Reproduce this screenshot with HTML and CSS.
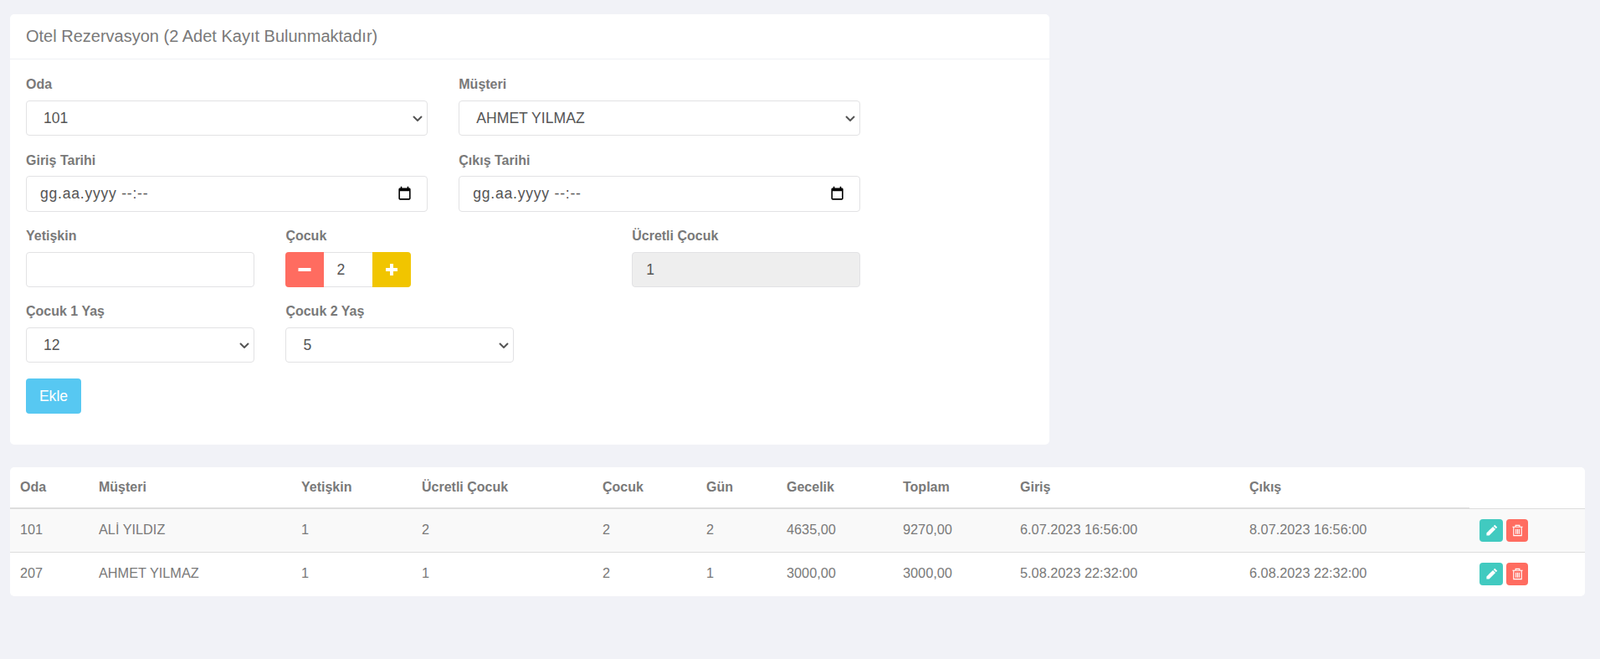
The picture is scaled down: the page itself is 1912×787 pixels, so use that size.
FILE: index.html
```html
<!DOCTYPE html>
<html lang="tr">
<head>
    <meta charset="UTF-8">
    <title>Otel Rezervasyon</title>
    <link rel="stylesheet" href="styles.css">
</head>
<body>

<div class="main">
    <section class="card form-card">
        <header class="card-head">Otel Rezervasyon (2 Adet Kayıt Bulunmaktadır)</header>
        <form class="form-grid">
            <div class="field span-5">
                <label>Oda</label>
                <select class="control"><option>101</option></select>
            </div>
            <div class="field span-5">
                <label>Müşteri</label>
                <select class="control"><option>AHMET YILMAZ</option></select>
            </div>

            <div class="field date-field span-5">
                <label>Giriş Tarihi</label>
                <div class="control date-control">
                    <input class="date-text" type="text" value="gg.aa.yyyy --:--">
                    <svg class="cal-icon" viewBox="0 0 24 24"><path d="M19 3h-1V1h-2v2H8V1H6v2H5c-1.11 0-1.99.9-1.99 2L3 19c0 1.1.89 2 2 2h14c1.1 0 2-.9 2-2V5c0-1.1-.9-2-2-2zm0 16H5V8h14v11z"/></svg>
                </div>
            </div>
            <div class="field date-field span-5">
                <label>Çıkış Tarihi</label>
                <div class="control date-control">
                    <input class="date-text" type="text" value="gg.aa.yyyy --:--">
                    <svg class="cal-icon" viewBox="0 0 24 24"><path d="M19 3h-1V1h-2v2H8V1H6v2H5c-1.11 0-1.99.9-1.99 2L3 19c0 1.1.89 2 2 2h14c1.1 0 2-.9 2-2V5c0-1.1-.9-2-2-2zm0 16H5V8h14v11z"/></svg>
                </div>
            </div>

            <div class="field span-3">
                <label>Yetişkin</label>
                <input class="control" type="text">
            </div>
            <div class="field span-3">
                <label>Çocuk</label>
                <div class="stepper">
                    <button type="button" class="step-btn step-minus">
                        <svg viewBox="0 0 16 16"><rect x="0.5" y="6" width="15" height="4"/></svg>
                    </button>
                    <input class="step-value" type="text" value="2">
                    <button type="button" class="step-btn step-plus">
                        <svg viewBox="0 0 16 16"><path d="M6 1h4v5h5v4h-5v5H6v-5H1V6h5z"/></svg>
                    </button>
                </div>
            </div>
            <div class="field paid-field">
                <label>Ücretli Çocuk</label>
                <input class="control" type="text" value="1" disabled>
            </div>

            <div class="field span-3">
                <label>Çocuk 1 Yaş</label>
                <select class="control"><option>12</option></select>
            </div>
            <div class="field span-3">
                <label>Çocuk 2 Yaş</label>
                <select class="control"><option>5</option></select>
            </div>

            <div class="span-12">
                <button type="button" class="btn-add">Ekle</button>
            </div>
        </form>
    </section>

    <section class="card table-card">
        <table class="res-table">
            <colgroup>
                <col class="c-oda"><col class="c-musteri"><col class="c-yetiskin"><col class="c-ucretli">
                <col class="c-cocuk"><col class="c-gun"><col class="c-gecelik"><col class="c-toplam">
                <col class="c-giris"><col class="c-cikis"><col class="c-actions">
            </colgroup>
            <thead>
                <tr>
                    <th>Oda</th><th>Müşteri</th><th>Yetişkin</th><th>Ücretli Çocuk</th><th>Çocuk</th>
                    <th>Gün</th><th>Gecelik</th><th>Toplam</th><th>Giriş</th><th>Çıkış</th><th></th>
                </tr>
            </thead>
            <tbody>
                <tr class="striped">
                    <td>101</td><td>ALİ YILDIZ</td><td>1</td><td>2</td><td>2</td><td>2</td>
                    <td>4635,00</td><td>9270,00</td><td>6.07.2023 16:56:00</td><td>8.07.2023 16:56:00</td>
                    <td class="actions">
                        <button type="button" class="act-btn act-edit">
                            <svg viewBox="0 0 16 16"><path d="M12 .8l3.2 3.2-1.6 1.6-3.2-3.2zM9.7 3.1l3.2 3.2-8 8H1.5v-3.2z"/></svg>
                        </button>
                        <button type="button" class="act-btn act-del">
                            <svg viewBox="0 0 16 16"><path class="trash" d="M1.5 3.5h13M5.5 3.5V1.5h5v2M3 3.5v11h10v-11M6 6v6.5M8 6v6.5M10 6v6.5"/></svg>
                        </button>
                    </td>
                </tr>
                <tr>
                    <td>207</td><td>AHMET YILMAZ</td><td>1</td><td>1</td><td>2</td><td>1</td>
                    <td>3000,00</td><td>3000,00</td><td>5.08.2023 22:32:00</td><td>6.08.2023 22:32:00</td>
                    <td class="actions">
                        <button type="button" class="act-btn act-edit">
                            <svg viewBox="0 0 16 16"><path d="M12 .8l3.2 3.2-1.6 1.6-3.2-3.2zM9.7 3.1l3.2 3.2-8 8H1.5v-3.2z"/></svg>
                        </button>
                        <button type="button" class="act-btn act-del">
                            <svg viewBox="0 0 16 16"><path class="trash" d="M1.5 3.5h13M5.5 3.5V1.5h5v2M3 3.5v11h10v-11M6 6v6.5M8 6v6.5M10 6v6.5"/></svg>
                        </button>
                    </td>
                </tr>
            </tbody>
        </table>
    </section>
</div>

</body>
</html>
```
FILE: styles.css
```css
* {
    box-sizing: border-box;
}
body {
    margin: 0;
    background-color: #f1f2f7;
    font-family: "Liberation Sans", Arial, sans-serif;
    font-size: 16px;
    color: #797979;
}
.main {
    padding: 17px 18px 40px 12px;
}
.card {
    background-color: #fff;
    border-radius: 5px;
}
.form-card {
    width: 1242px;
    margin-bottom: 27px;
}
.card-head {
    height: 54px;
    padding: 0 19px;
    line-height: 52px;
    font-size: 20px;
    border-bottom: 1px solid #eff0f4;
}
.form-grid {
    display: grid;
    grid-template-columns: repeat(12, 1fr);
    column-gap: 37.5px;
    row-gap: 19px;
    padding: 20px 19px 37px;
}
.span-3 {
    grid-column: span 3;
}
.span-5 {
    grid-column: span 5;
}
.span-12 {
    grid-column: span 12;
}
.paid-field {
    grid-column: 8 / span 3;
}
.field label {
    display: block;
    height: 19px;
    line-height: 19px;
    margin-bottom: 10px;
    font-weight: bold;
}
.date-field label {
    margin-top: 1px;
    margin-bottom: 9px;
}
.control {
    display: block;
    width: 100%;
    height: 42px;
    padding: 0 16px;
    border: 1px solid #e2e2e4;
    border-radius: 4px;
    background-color: #fff;
    font-family: inherit;
    font-size: 17.6px;
    color: #555;
    outline: none;
}
select.control {
    appearance: none;
    padding-left: 20px;
    background-image: url("data:image/svg+xml,%3Csvg xmlns='http://www.w3.org/2000/svg' viewBox='0 0 12 7'%3E%3Cpath d='M1 1l5 5 5-5' fill='none' stroke='%23555' stroke-width='2'/%3E%3C/svg%3E");
    background-repeat: no-repeat;
    background-size: 12px 7px;
    background-position: right 5px center;
}
.control:disabled {
    background-color: #eee;
}
.date-control {
    display: flex;
    align-items: center;
    height: 43px;
    padding-right: 17px;
}
.date-text {
    flex: 1;
    min-width: 0;
    border: none;
    padding: 0;
    outline: none;
    font-family: inherit;
    font-size: 17.6px;
    letter-spacing: 0.75px;
    color: #555;
}
.cal-icon {
    width: 19px;
    height: 19px;
}
.stepper {
    display: flex;
    width: 150px;
    height: 42px;
}
.step-btn {
    display: flex;
    align-items: center;
    justify-content: center;
    width: 46px;
    padding: 0;
    border: none;
}
.step-btn svg {
    width: 16px;
    height: 16px;
    fill: #fff;
}
.step-minus {
    background-color: #ff6c60;
    border-radius: 4px 0 0 4px;
}
.step-plus {
    background-color: #f1c500;
    border-radius: 0 4px 4px 0;
}
.step-value {
    width: 58px;
    padding: 0 0 0 15px;
    border: none;
    border-top: 1px solid #e2e2e4;
    border-bottom: 1px solid #e2e2e4;
    outline: none;
    font-family: inherit;
    font-size: 17.6px;
    color: #555;
}
.btn-add {
    display: block;
    width: 66px;
    height: 42px;
    padding: 0;
    border: none;
    border-radius: 4px;
    background-color: #57c8f2;
    font-family: inherit;
    font-size: 17.6px;
    color: #fff;
}
.res-table {
    width: 100%;
    border-collapse: collapse;
    table-layout: fixed;
}
.c-oda { width: 94px; }
.c-musteri { width: 242px; }
.c-yetiskin { width: 144px; }
.c-ucretli { width: 216px; }
.c-cocuk { width: 124px; }
.c-gun { width: 96px; }
.c-gecelik { width: 139px; }
.c-toplam { width: 140px; }
.c-giris { width: 274px; }
.c-cikis { width: 275px; }
.c-actions { width: 138px; }
.res-table th {
    height: 49px;
    padding: 0 12px;
    text-align: left;
    border-bottom: 2px solid #ddd;
}
.res-table th:last-child {
    border-bottom: none;
}
.res-table td {
    height: 52px;
    padding: 0 12px 2px;
    font-size: 16.3px;
    border-top: 1px solid #ddd;
}
.res-table .actions {
    padding-bottom: 0;
    font-size: 0;
}
.res-table tbody tr:last-child td {
    height: 53px;
}
.res-table .striped td {
    background-color: #f9f9f9;
}
.act-btn {
    display: inline-flex;
    align-items: center;
    justify-content: center;
    height: 27px;
    margin: 0 4px 0 0;
    padding: 0;
    border: none;
    border-radius: 4px;
    vertical-align: middle;
}
.act-btn svg {
    width: 15px;
    height: 15px;
}
.act-edit {
    width: 28px;
    background-color: #41cac0;
    fill: #fff;
}
.act-del {
    width: 26px;
    background-color: #ff6c60;
}
.trash {
    fill: none;
    stroke: #fff;
    stroke-width: 1.2;
}
```
